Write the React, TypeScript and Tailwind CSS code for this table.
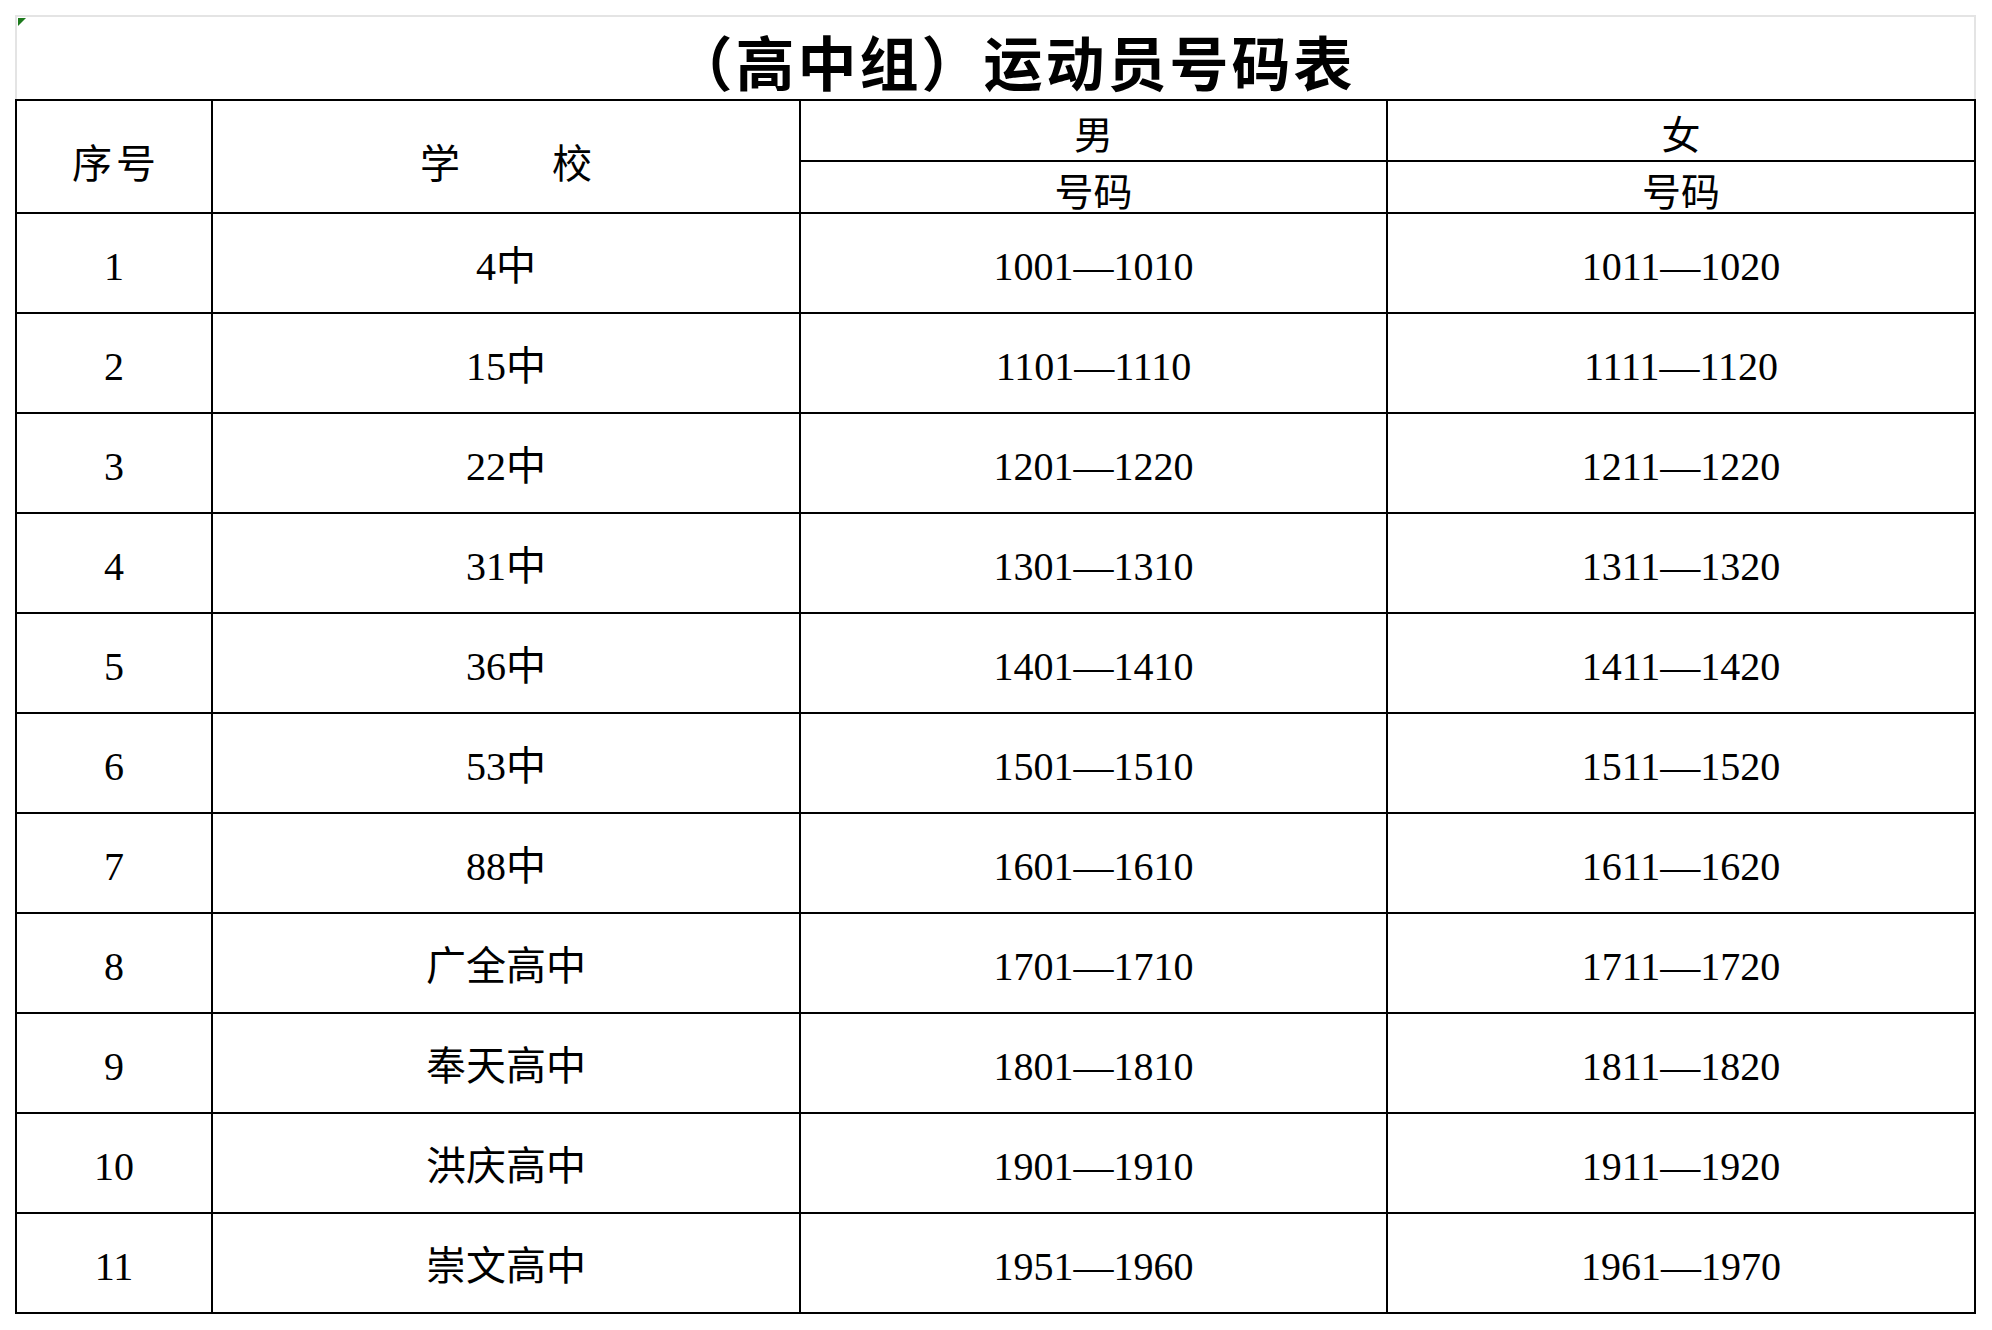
import React from "react";

const rows: [string, string, string, string][] = [
  ["1", "4中", "1001—1010", "1011—1020"],
  ["2", "15中", "1101—1110", "1111—1120"],
  ["3", "22中", "1201—1220", "1211—1220"],
  ["4", "31中", "1301—1310", "1311—1320"],
  ["5", "36中", "1401—1410", "1411—1420"],
  ["6", "53中", "1501—1510", "1511—1520"],
  ["7", "88中", "1601—1610", "1611—1620"],
  ["8", "广全高中", "1701—1710", "1711—1720"],
  ["9", "奉天高中", "1801—1810", "1811—1820"],
  ["10", "洪庆高中", "1901—1910", "1911—1920"],
  ["11", "崇文高中", "1951—1960", "1961—1970"],
];

const cellFont =
  "font-['Liberation_Serif','Noto_Sans_CJK_SC',serif] text-[40px] leading-none text-black";

export default function App() {
  return (
    <div className="w-[1992px] h-[1330px] bg-white pt-[15px] pl-[15px]">
      <div className="w-[1961px]">
        {/* title frame */}
        <div className="relative h-[84px] border-t-2 border-l-2 border-r-2 border-[#e4e4e4] flex items-end justify-center pl-[38px] pb-[9px]">
          <div className="absolute left-[1px] top-[1px] w-0 h-0 border-t-[8px] border-r-[8px] border-t-[#1d7a1d] border-r-transparent" />
          <span className="font-['Noto_Sans_CJK_SC',sans-serif] font-bold text-[59px] leading-none tracking-[3px] text-black">
            （高中组）运动员号码表
          </span>
        </div>
        {/* table */}
        <div className="grid grid-cols-[196px_588px_587px_588px] border-t-2 border-l-2 border-black">
          <div className="row-span-2 border-r-2 border-b-2 border-black flex items-center justify-center pt-[8px] pl-[4px]">
            <span className="font-['Noto_Sans_CJK_SC',sans-serif] text-[40px] leading-none tracking-[4px] text-black">序号</span>
          </div>
          <div className="row-span-2 border-r-2 border-b-2 border-black flex items-center justify-center pt-[8px] pl-[4px]">
            <span className="font-['Noto_Sans_CJK_SC',sans-serif] text-[40px] leading-none tracking-[4px] text-black">学　　校</span>
          </div>
          <div className="h-[61px] border-r-2 border-b-2 border-black flex items-center justify-center pt-[4px]">
            <span className="font-['Noto_Sans_CJK_SC',sans-serif] text-[39px] leading-none text-black">男</span>
          </div>
          <div className="h-[61px] border-r-2 border-b-2 border-black flex items-center justify-center pt-[4px]">
            <span className="font-['Noto_Sans_CJK_SC',sans-serif] text-[39px] leading-none text-black">女</span>
          </div>
          <div className="h-[52px] border-r-2 border-b-2 border-black flex items-center justify-center pt-[4px]">
            <span className="font-['Noto_Sans_CJK_SC',sans-serif] text-[39px] leading-none text-black">号码</span>
          </div>
          <div className="h-[52px] border-r-2 border-b-2 border-black flex items-center justify-center pt-[4px]">
            <span className="font-['Noto_Sans_CJK_SC',sans-serif] text-[39px] leading-none text-black">号码</span>
          </div>
          {rows.map((r) => (
            <React.Fragment key={r[0]}>
              {r.map((c, i) => (
                <div
                  key={i}
                  className={`h-[100px] border-r-2 border-b-2 border-black flex items-center justify-center pt-[8px] ${cellFont}`}
                >
                  {c}
                </div>
              ))}
            </React.Fragment>
          ))}
        </div>
      </div>
    </div>
  );
}
